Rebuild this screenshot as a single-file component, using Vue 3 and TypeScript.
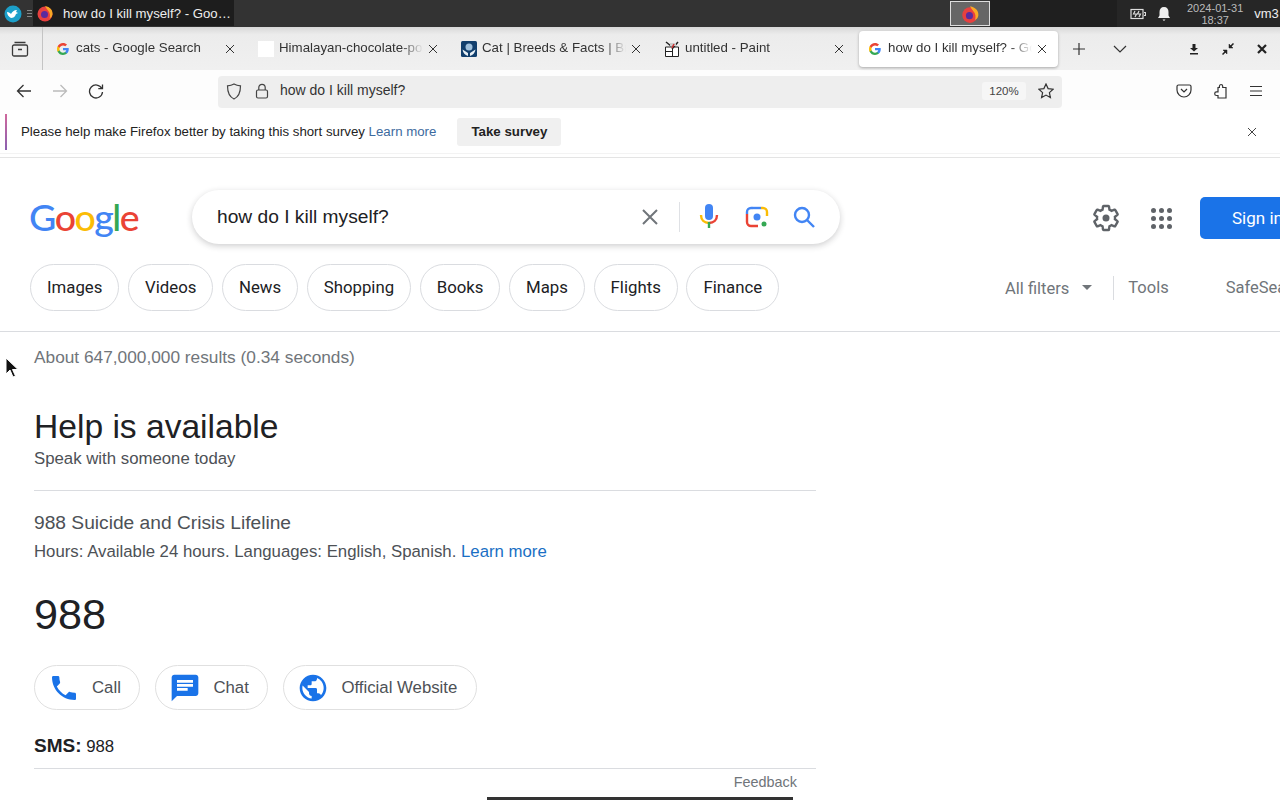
<script setup lang="ts">
interface BrowserTab {
  title: string
  icon: 'google' | 'blank' | 'britannica' | 'paint'
  active?: boolean
}

const tabs: BrowserTab[] = [
  { title: 'cats - Google Search', icon: 'google' },
  { title: 'Himalayan-chocolate-point', icon: 'blank' },
  { title: 'Cat | Breeds & Facts | Britannica', icon: 'britannica' },
  { title: 'untitled - Paint', icon: 'paint' },
  { title: 'how do I kill myself? - Google Search', icon: 'google', active: true },
]

const chips = ['Images', 'Videos', 'News', 'Shopping', 'Books', 'Maps', 'Flights', 'Finance']
</script>

<template>
  <div class="screen">
    <header class="taskbar">
      <div class="start-icon">
        <svg width="18" height="18" viewBox="0 0 18 18">
          <circle cx="9" cy="9" r="8.500" fill="#1c9fc9" />
          <path d="M3 7c2 0 3 1 4 2 1-2 3-4 6-4l-1 2 2 1-2 1c-1 3-3 4-5 4-2-1-4-3-4-6z" fill="#fff" />
        </svg>
      </div>
      <div class="grip"><i></i><i></i><i></i></div>
      <div class="task-app">
        <svg class="fx" width="18" height="18" viewBox="0 0 18 18">
          <circle cx="9" cy="10" r="7.500" fill="#e8403f" />
          <path d="M9 2c5 1 8 4 7.500 8.500-.5 2-1.500 3-3 4 1-3 .5-6-1.500-8C11 5 10 4 9 2z" fill="#f9a825" />
          <circle cx="8.500" cy="10.500" r="3.500" fill="#5b2a9e" />
        </svg>
        <span>how do I kill myself? - Goo…</span>
      </div>
      <div class="task-mid">
        <div class="task-thumb">
          <svg width="20" height="20" viewBox="0 0 18 18">
            <circle cx="9" cy="10" r="7" fill="#e8403f" />
            <path d="M9 2c5 1 8 4 7.500 8.500-.5 2-1.500 3-3 4 1-3 .5-6-1.500-8C11 5 10 4 9 2z" fill="#f9a825" />
            <circle cx="8.500" cy="10.500" r="3.200" fill="#5b2a9e" />
          </svg>
        </div>
        <div class="task-dark"></div>
      </div>
      <div class="tray">
        <svg width="16" height="12" viewBox="0 0 16 12" fill="none" stroke="#ddd" stroke-width="1.200">
          <rect x="1" y="1.500" width="12" height="9" />
          <path d="M14 4.500h1.500v3H14M5 3 3.500 6h3L5 9M9 3 7.500 6h3L9 9" />
        </svg>
        <svg class="bell" width="14" height="16" viewBox="0 0 14 16">
          <path d="M7 1c3 0 4.500 2 4.500 5v3.500L13 12H1l1.500-2.500V6C2.500 3 4 1 7 1zM5.500 13.500h3L7 15z" fill="#eee" />
        </svg>
        <div class="clock">
          <span>2024-01-31</span>
          <span>18:37</span>
        </div>
        <span class="user">vm3</span>
      </div>
    </header>

    <div class="tabstrip">
      <div class="archive">
        <svg width="18" height="18" viewBox="0 0 18 18" fill="none" stroke="#3a3a3a" stroke-width="1.300">
          <path d="M3.500 2.500h11M1.500 6.500a1.500 1.500 0 0 1 1.500-1.500h12a1.500 1.500 0 0 1 1.500 1.500v8a1.500 1.500 0 0 1-1.500 1.500H3a1.500 1.500 0 0 1-1.500-1.500zM7 9.500h4" />
        </svg>
      </div>
      <div v-for="tab in tabs" :key="tab.title" class="tab" :class="{ active: tab.active, 'is-google': tab.icon === 'google' }">
        <svg v-if="tab.icon === 'google'" class="favicon small" viewBox="0 0 24 24">
          <path fill="#4285F4" d="M23.49 12.27c0-.79-.07-1.54-.19-2.27H12v4.510h6.470c-.29 1.480-1.140 2.730-2.400 3.580v3h3.860c2.260-2.090 3.560-5.170 3.560-8.820z" />
          <path fill="#34A853" d="M12 24c3.240 0 5.950-1.080 7.930-2.910l-3.860-3c-1.080.72-2.450 1.160-4.070 1.160-3.130 0-5.780-2.110-6.730-4.960H1.290v3.090C3.260 21.300 7.310 24 12 24z" />
          <path fill="#FBBC05" d="M5.270 14.290c-.25-.72-.38-1.490-.38-2.290s.14-1.570.38-2.290V6.620H1.290C.47 8.240 0 10.060 0 12s.47 3.760 1.290 5.380l3.980-3.090z" />
          <path fill="#EA4335" d="M12 4.750c1.770 0 3.350.61 4.600 1.800l3.420-3.420C17.950 1.190 15.240 0 12 0 7.310 0 3.260 2.700 1.290 6.620l3.980 3.090C6.220 6.860 8.870 4.750 12 4.750z" />
        </svg>
        <span v-else-if="tab.icon === 'blank'" class="favicon blank"></span>
        <svg v-else-if="tab.icon === 'britannica'" class="favicon" viewBox="0 0 16 16">
          <rect width="16" height="16" rx="1.500" fill="#123f6d" />
          <circle cx="8" cy="6" r="3.500" fill="#9fc0dc" />
          <path d="M1.500 8.500 7 12v3C4 14 2 12 1.500 8.500zM14.500 8.500 9 12v3c3-1 5-3 5.500-6.500z" fill="#e8f0f6" />
        </svg>
        <svg v-else class="favicon" viewBox="0 0 16 16">
          <path d="M1.500 6h13v9.500h-13z" fill="#fff" stroke="#222" />
          <path d="M8.500 6v9.500M1.500 10.500h7" stroke="#222" />
          <path d="M2 1l5 4M14 1 8 8" stroke="#222" stroke-width="1.500" />
          <path d="M6 2h6v3H6z" fill="#ccc" />
          <path d="M10 3 8 7" stroke="#c33" stroke-width="1.500" />
        </svg>
        <span class="tab-title">{{ tab.title }}</span>
        <svg class="tab-close" width="10" height="10" viewBox="0 0 10 10" stroke="#333" stroke-width="1">
          <path d="M1 1l8 8M9 1 1 9" />
        </svg>
      </div>
      <div class="strip-btn plus">
        <svg width="14" height="14" viewBox="0 0 14 14" stroke="#333" stroke-width="1.200"><path d="M7 1v12M1 7h12" /></svg>
      </div>
      <div class="strip-btn chevron">
        <svg width="14" height="8" viewBox="0 0 14 8" fill="none" stroke="#333" stroke-width="1.200"><path d="M1 1l6 6 6-6" /></svg>
      </div>
      <div class="window-btns">
        <svg width="12" height="12" viewBox="0 0 12 12" fill="#222">
          <path d="M4.500 1h3v4H10L6 8.500 2 5h2.500zM2 10h8v1.500H2z" />
        </svg>
        <svg width="12" height="12" viewBox="0 0 12 12" fill="#222" stroke="#222">
          <path d="M7 1v4h4zM1 7h4v4z" stroke-width="0.500" />
          <path d="M8 4l3.500-3.500M4 8 .5 11.500" stroke-width="1.500" />
        </svg>
        <svg width="12" height="12" viewBox="0 0 12 12" stroke="#222" stroke-width="2.200"><path d="M2 2l8 8M10 2l-8 8" /></svg>
      </div>
    </div>

    <nav class="navbar">
      <svg class="nav-icon" width="16" height="16" viewBox="0 0 16 16" fill="none" stroke="#333" stroke-width="1.300"><path d="M15 8H1.500M7.500 2 1.500 8l6 6" /></svg>
      <svg class="nav-icon" width="16" height="16" viewBox="0 0 16 16" fill="none" stroke="#bbb" stroke-width="1.300"><path d="M1 8h13.500M8.500 2l6 6-6 6" /></svg>
      <svg class="nav-icon" width="16" height="16" viewBox="0 0 16 16" fill="none" stroke="#333" stroke-width="1.300"><path d="M13.800 5.500A6.500 6.500 0 1 0 14.500 9M14.500 1.500v4.200h-4.200" /></svg>
      <div class="urlbar">
        <svg width="16" height="17" viewBox="0 0 16 17" fill="none" stroke="#444" stroke-width="1.200"><path d="M8 1c2 1.200 4 1.700 6.500 1.800C14.500 9 12.500 14 8 16 3.500 14 1.500 9 1.500 2.800 4 2.700 6 2.200 8 1z" /></svg>
        <svg class="lock" width="14" height="16" viewBox="0 0 14 16" fill="none" stroke="#444" stroke-width="1.200"><rect x="1.500" y="7" width="11" height="8" rx="1.500" /><path d="M3.800 7V4.500a3.200 3.200 0 0 1 6.400 0V7" /></svg>
        <span class="url-text">how do I kill myself?</span>
        <span class="zoom-pill">120%</span>
        <svg class="star" width="16" height="16" viewBox="0 0 16 16" fill="none" stroke="#333" stroke-width="1.200"><path d="M8 1l2.100 4.600 5 .6-3.700 3.400 1 5L8 12.100l-4.400 2.500 1-5L.9 6.200l5-.6z" /></svg>
      </div>
      <svg class="pocket" width="16" height="14" viewBox="0 0 16 14" fill="none" stroke="#333" stroke-width="1.200"><path d="M2.500 1h11A1.500 1.500 0 0 1 15 2.500V6a7 7 0 0 1-14 0V2.500A1.500 1.500 0 0 1 2.500 1zM5 5l3 3 3-3" /></svg>
      <svg class="puzzle" width="16" height="16" viewBox="0 0 16 16" fill="none" stroke="#333" stroke-width="1.200"><path d="M9 1.500a1.700 1.700 0 0 1 1.700 1.700V4.500H14V15H6v-2.500H4.500a1.800 1.800 0 0 1 0-3.600H6V4.500h1.400V3.200A1.700 1.700 0 0 1 9 1.500z" /></svg>
      <svg class="burger" width="14" height="12" viewBox="0 0 14 12" stroke="#333" stroke-width="1.200"><path d="M1 1.500h12M1 6h12M1 10.500h12" /></svg>
    </nav>

    <div class="survey">
      <span class="survey-stripe"></span>
      <span class="survey-text">Please help make Firefox better by taking this short survey <a>Learn more</a></span>
      <button class="survey-btn">Take survey</button>
      <svg class="survey-close" width="10" height="10" viewBox="0 0 10 10" stroke="#444" stroke-width="1"><path d="M1 1l8 8M9 1 1 9" /></svg>
    </div>

    <main class="page">
      <div class="g-header">
        <div class="g-logo"><b class="blue">G</b><b class="red">o</b><b class="yellow">o</b><b class="blue">g</b><b class="green">l</b><b class="red">e</b></div>
        <div class="searchbox">
          <span class="query">how do I kill myself?</span>
          <svg class="clear" width="18" height="18" viewBox="0 0 18 18" stroke="#70757a" stroke-width="2"><path d="M2 2l14 14M16 2 2 16" /></svg>
          <span class="sb-divider"></span>
          <svg class="mic" width="20" height="26" viewBox="0 0 20 26">
            <rect x="6" y="0" width="8" height="16" rx="4" fill="#4285f4" />
            <path d="M2 11c0 5 3.500 8 8 8" fill="none" stroke="#fbbc05" stroke-width="2.400" />
            <path d="M18 11c0 5-3.500 8-8 8" fill="none" stroke="#ea4335" stroke-width="2.400" />
            <path d="M8.800 18h2.400v6H8.800z" fill="#34a853" />
          </svg>
          <svg class="lens" width="24" height="24" viewBox="0 0 24 24" fill="none" stroke-width="2.400">
            <path d="M2 9V7a4 4 0 0 1 4-4h2" stroke="#4285f4" />
            <path d="M8 3h8" stroke="#4285f4" />
            <path d="M16 3h2a4 4 0 0 1 4 4v4" stroke="#fbbc05" />
            <path d="M2 9v8a4 4 0 0 0 4 4h7" stroke="#ea4335" />
            <circle cx="12" cy="12" r="3.500" fill="#4285f4" stroke="none" />
            <circle cx="19" cy="19" r="2.500" fill="#34a853" stroke="none" />
          </svg>
          <svg class="magnifier" width="24" height="24" viewBox="0 0 24 24" fill="none" stroke="#4285f4" stroke-width="2.400"><circle cx="10" cy="10" r="7" /><path d="M15 15l7 7" /></svg>
        </div>
        <svg class="gear" width="30" height="30" viewBox="0 0 24 24" fill="none" stroke="#5f6368" stroke-width="1.900">
          <path d="M19.140 12.940c.04-.3.06-.61.06-.94 0-.32-.02-.64-.07-.94l2.030-1.580c.18-.14.23-.41.12-.61l-1.920-3.320c-.12-.22-.37-.29-.59-.22l-2.390.96c-.5-.38-1.030-.7-1.620-.94L14.400 2.810c-.04-.24-.24-.41-.48-.41h-3.840c-.24 0-.43.17-.47.41L9.250 5.350c-.59.24-1.130.57-1.620.94L5.240 5.330c-.22-.08-.47 0-.59.22L2.740 8.870c-.12.21-.08.47.12.61l2.030 1.580c-.05.3-.09.63-.09.94s.02.64.07.94l-2.030 1.580c-.18.14-.23.41-.12.610l1.920 3.320c.12.22.37.29.59.22l2.390-.96c.5.38 1.030.7 1.620.94l.36 2.540c.05.24.24.41.48.41h3.840c.24 0 .44-.17.47-.41l.36-2.540c.59-.24 1.130-.56 1.620-.94l2.390.96c.22.08.47 0 .59-.22l1.920-3.320c.12-.22.07-.47-.12-.61z" />
          <circle cx="12" cy="12" r="2.800" fill="#5f6368" stroke="none" />
        </svg>
        <div class="apps"><i v-for="n in 9" :key="n"></i></div>
        <div class="signin">Sign in</div>
      </div>

      <div class="g-filters">
        <div class="chips">
          <span v-for="chip in chips" :key="chip" class="chip">{{ chip }}</span>
        </div>
        <div class="filter-tools">
          <span class="all-filters">All filters</span>
          <i class="caret"></i>
          <span class="tools-divider"></span>
          <span>Tools</span>
          <span class="safe">SafeSearch</span>
        </div>
      </div>

      <section class="results">
        <div class="stats">About 647,000,000 results (0.34 seconds)</div>
        <h1>Help is available</h1>
        <div class="sub">Speak with someone today</div>
        <hr />
        <div class="line-name">988 Suicide and Crisis Lifeline</div>
        <div class="hours">Hours: Available 24 hours. Languages: English, Spanish. <a>Learn more</a></div>
        <div class="number">988</div>
        <div class="actions">
          <span class="action call">
            <svg width="32" height="32" viewBox="0 0 24 24" fill="#1a73e8"><path d="M6.620 10.790c1.440 2.830 3.760 5.140 6.590 6.590l2.200-2.200c.27-.27.67-.36 1.020-.24 1.120.37 2.330.57 3.570.57.55 0 1 .45 1 1V20c0 .55-.45 1-1 1-9.390 0-17-7.610-17-17 0-.55.45-1 1-1h3.500c.55 0 1 .45 1 1 0 1.250.2 2.450.57 3.570.11.35.03.74-.25 1.020l-2.200 2.200z" /></svg>
            Call
          </span>
          <span class="action chat">
            <svg width="32" height="32" viewBox="0 0 24 24" fill="#1a73e8"><path d="M20 2H4c-1.100 0-2 .9-2 2v18l4-4h14c1.100 0 2-.9 2-2V4c0-1.100-.9-2-2-2zM6 9h12v2H6V9zm8 5H6v-2h8v2zm4-6H6V6h12v2z" /></svg>
            Chat
          </span>
          <span class="action site">
            <svg width="32" height="32" viewBox="0 0 24 24" fill="#1a73e8"><path d="M12 2C6.480 2 2 6.480 2 12s4.480 10 10 10 10-4.480 10-10S17.520 2 12 2zm-1 17.930c-3.950-.49-7-3.850-7-7.930 0-.62.08-1.210.21-1.790L9 15v1c0 1.100.9 2 2 2v1.930zm6.900-2.540c-.26-.81-1-1.390-1.900-1.390h-1v-3c0-.55-.45-1-1-1H8v-2h2c.55 0 1-.45 1-1V7h2c1.100 0 2-.9 2-2v-.41c2.930 1.190 5 4.060 5 7.410 0 2.080-.8 3.970-2.100 5.390z" /></svg>
            Official Website
          </span>
        </div>
        <div class="sms"><b>SMS:</b> 988</div>
        <hr class="end" />
        <div class="feedback">Feedback</div>
      </section>
    </main>

    <svg class="cursor" width="14" height="22" viewBox="0 0 14 22">
      <path d="M1 1v16l4-4 3 7 2.500-1-3-6.500H13z" fill="#111" stroke="#fff" stroke-width="1" />
    </svg>
    <div class="bottom-bar"></div>
  </div>
</template>

<style>
html,
body {
  margin: 0;
  background: #fff;
  overflow: hidden;
}
</style>

<style scoped>
.screen {
  position: relative;
  width: 1280px;
  height: 800px;
  overflow: hidden;
  background: #fff;
  font-family: 'Liberation Sans', Arial, sans-serif;
  color: #202124;
}

/* taskbar */
.taskbar {
  display: flex;
  align-items: stretch;
  height: 27px;
  background: #333;
  color: #eee;
}
.start-icon {
  display: flex;
  align-items: center;
  padding-left: 4px;
}
.grip {
  display: flex;
  flex-direction: column;
  justify-content: center;
  gap: 2px;
  width: 5px;
  margin: 0 1px 0 5px;
}
.grip i {
  height: 1px;
  background: #888;
}
.task-app {
  display: flex;
  flex: none;
  align-items: center;
  width: 201px;
  height: 26px;
  box-sizing: border-box;
  padding-left: 3px;
  background: #1d1d1d;
  font-size: 13.200px;
  white-space: nowrap;
}
.task-app .fx {
  flex: none;
  margin-right: 9px;
}
.task-mid {
  display: flex;
  flex: none;
  margin-left: 716px;
}
.task-thumb {
  display: flex;
  align-items: center;
  justify-content: center;
  width: 38px;
  height: 23px;
  margin-top: 1px;
  border: 1px solid #ddd;
  background: #666;
}
.task-dark {
  width: 127px;
  background: #1f1f1f;
}
.tray {
  display: flex;
  align-items: center;
  flex: 1;
  padding-left: 13px;
  background: #262626;
  white-space: nowrap;
}
.bell {
  margin-left: 11px;
}
.clock {
  display: flex;
  flex-direction: column;
  align-items: center;
  margin-left: 16px;
  font-size: 11px;
  line-height: 12px;
  color: #bbb;
}
.user {
  margin-left: 11px;
  font-size: 13px;
}

/* tabs */
.tabstrip {
  display: flex;
  align-items: center;
  height: 43px;
  background: linear-gradient(#d8d8d8, #ececec 18%, #f0f0f0);
}
.archive {
  display: flex;
  flex: none;
  align-items: center;
  justify-content: center;
  box-sizing: border-box;
  width: 43px;
  height: 43px;
  margin-right: 1px;
  padding-right: 3px;
  border-right: 1px solid #c4c4c4;
}
.tab {
  display: flex;
  align-items: center;
  flex: none;
  box-sizing: border-box;
  width: 203px;
  height: 36px;
  padding: 0 12px 0 11px;
  font-size: 13.300px;
  color: #333;
}
.tab.is-google {
  padding-left: 13px;
}
.tab.active {
  width: 199px;
  height: 36px;
  margin-left: 3px;
  padding: 0 11px 0 10px;
  background: #fff;
  border-radius: 4px;
  box-shadow: 0 1px 3px rgba(0, 0, 0, 0.3);
}
.favicon {
  flex: none;
  width: 16px;
  height: 16px;
  margin-right: 5px;
}
.favicon.small {
  width: 12px;
  height: 12px;
  margin-right: 7px;
}
.favicon.blank {
  background: #fff;
}
.tab-title {
  flex: 1;
  min-width: 0;
  margin-bottom: 2px;
  overflow: hidden;
  white-space: nowrap;
  -webkit-mask-image: linear-gradient(90deg, #000 85%, transparent);
  mask-image: linear-gradient(90deg, #000 85%, transparent);
}
.tab-close {
  flex: none;
  margin-left: 5px;
}
.strip-btn {
  display: flex;
  justify-content: center;
  flex: none;
}
.plus {
  width: 14px;
  margin-left: 14px;
}
.chevron {
  width: 14px;
  margin-left: 27px;
}
.window-btns {
  display: flex;
  gap: 22px;
  margin-left: 61px;
}

/* nav */
.navbar {
  display: flex;
  align-items: center;
  box-sizing: border-box;
  height: 40px;
  padding: 2px 0 0 16px;
  background: #fdfdfd;
}
.nav-icon {
  flex: none;
  margin-right: 20px;
}
.urlbar {
  display: flex;
  flex: none;
  align-items: center;
  box-sizing: border-box;
  width: 844px;
  height: 32px;
  margin: 2px 0 0 94px;
  padding: 0 8px 2px;
  border-radius: 4px;
  background: #eee;
}
.lock {
  margin-left: 13px;
}
.url-text {
  flex: 1;
  margin: 0 0 3px 11px;
  font-size: 14px;
  color: #333;
}
.zoom-pill {
  width: 44px;
  height: 18px;
  line-height: 18px;
  border-radius: 3px;
  background: #f6f6f6;
  text-align: center;
  font-size: 11.500px;
  color: #444;
}
.star {
  margin-left: 12px;
}
.pocket {
  margin-left: 114px;
}
.puzzle {
  margin-left: 20px;
}
.burger {
  margin-left: 21px;
}

/* survey */
.survey {
  display: flex;
  align-items: center;
  height: 43px;
  border-bottom: 1px solid #f3f3f3;
  background: #fff;
}
.survey-stripe {
  width: 2px;
  height: 36px;
  margin-left: 5px;
  background: linear-gradient(#d0699d, #8a5fb0);
}
.survey-text {
  margin-left: 14px;
  font-size: 13.250px;
  color: #222;
}
.survey-text a {
  color: #3c6a9e;
}
.survey-btn {
  width: 104px;
  height: 28px;
  margin-left: 21px;
  padding: 0;
  border: 0;
  border-radius: 3px;
  background: #f0f0f0;
  font: bold 13.300px 'Liberation Sans', Arial, sans-serif;
  color: #222;
}
.survey-close {
  margin-left: auto;
  margin-right: 23px;
}

/* google page */
.page {
  margin-top: 3px;
  border-top: 1px solid #e4e4e4;
}
.g-header {
  display: flex;
  align-items: center;
  height: 54px;
  padding: 32px 0 0 29px;
  white-space: nowrap;
}
.g-logo {
  flex: none;
  width: 111px;
  margin-top: -2px;
  font: 700 37.500px Lato, 'Open Sans', sans-serif;
  letter-spacing: -1.500px;
}
.g-logo b {
  font-weight: 500;
}
.blue {
  color: #4285f4;
}
.red {
  color: #ea4335;
}
.yellow {
  color: #fbbc05;
}
.green {
  color: #34a853;
}
.searchbox {
  display: flex;
  align-items: center;
  flex: none;
  box-sizing: border-box;
  width: 648px;
  height: 54px;
  margin-left: 52px;
  padding: 0 24px 0 25px;
  border-radius: 27px;
  background: #fff;
  box-shadow: 0 2px 6px rgba(32, 33, 36, 0.22);
}
.query {
  flex: 1;
  font-size: 19.200px;
  color: #202124;
}
.clear {
  flex: none;
}
.sb-divider {
  width: 1px;
  height: 30px;
  margin: 0 19px 0 20px;
  background: #dfe1e5;
}
.lens {
  margin-left: 26px;
}
.magnifier {
  margin-left: 23px;
}
.gear {
  flex: none;
  margin: 2px 0 0 251px;
}
.apps {
  display: grid;
  flex: none;
  grid-template-columns: repeat(3, 5px);
  gap: 3px;
  margin: 2px 0 0 30px;
}
.apps i {
  width: 5px;
  height: 5px;
  border-radius: 50%;
  background: #5f6368;
}
.signin {
  flex: none;
  width: 120px;
  height: 42px;
  margin: 2px 0 0 28px;
  padding-left: 32px;
  border-radius: 5px;
  background: #1a73e8;
  color: #fff;
  font: 17px/42px Roboto, sans-serif;
}
.g-filters {
  display: flex;
  align-items: center;
  height: 47px;
  padding: 20px 0 20px 30px;
  border-bottom: 1px solid #dadce0;
  white-space: nowrap;
}
.chips {
  display: flex;
  flex: none;
  gap: 8.600px;
  width: 749px;
}
.chip {
  box-sizing: border-box;
  height: 47px;
  padding: 0 16px;
  border: 1px solid #dadce0;
  border-radius: 24px;
  font: 16.800px/45px Roboto, sans-serif;
  color: #202124;
}
.filter-tools {
  display: flex;
  flex: none;
  align-items: center;
  margin-left: 226px;
  font: 16.500px Roboto, sans-serif;
  color: #70757a;
}
.all-filters {
  margin-top: 2px;
}
.caret {
  width: 0;
  height: 0;
  margin-left: 13px;
  border: 5px solid transparent;
  border-top: 5px solid #70757a;
  border-bottom: 0;
}
.tools-divider {
  width: 1px;
  height: 24px;
  margin: 0 14px 0 21px;
  background: #dadce0;
}
.safe {
  margin-left: 57px;
}

/* result */
.results {
  width: 782px;
  margin-left: 34px;
  font-size: 16.800px;
}
.stats {
  margin-top: 13px;
  font-size: 17.300px;
  line-height: 24px;
  color: #70757a;
}
h1 {
  margin: 37px 0 0;
  font-size: 33.600px;
  font-weight: 400;
  line-height: 42px;
}
.sub {
  line-height: 22px;
  color: #4d5156;
}
hr {
  height: 1px;
  margin: 20px 0 0;
  border: 0;
  background: #dadce0;
}
.line-name {
  margin-top: 20px;
  font-size: 19.200px;
  line-height: 24px;
  color: #4d5156;
}
.hours {
  margin-top: 5px;
  line-height: 24px;
  color: #4d5156;
}
.hours a {
  color: #1a6fc4;
}
.number {
  margin-top: 25px;
  font-size: 43.200px;
  line-height: 50px;
}
.actions {
  display: flex;
  gap: 15px;
  margin-top: 26px;
}
.action {
  display: flex;
  align-items: center;
  box-sizing: border-box;
  height: 45px;
  padding: 0 18.500px 0 13px;
  border: 1px solid #e0e0e0;
  border-radius: 23px;
  font-size: 16.800px;
  color: #4d5156;
  white-space: nowrap;
}
.action svg {
  margin-right: 12px;
}
.sms {
  margin-top: 24px;
  font-size: 16.800px;
  line-height: 24px;
}
.sms b {
  font-size: 19px;
}
hr.end {
  margin-top: 9px;
}
.feedback {
  margin-top: 3px;
  padding-right: 19px;
  text-align: right;
  font-size: 14.400px;
  line-height: 20px;
  color: #70757a;
}

/* overlays */
.cursor {
  position: absolute;
  left: 5px;
  top: 357px;
}
.bottom-bar {
  position: absolute;
  left: 487px;
  bottom: 0;
  width: 306px;
  height: 3px;
  background: #333;
}
</style>
